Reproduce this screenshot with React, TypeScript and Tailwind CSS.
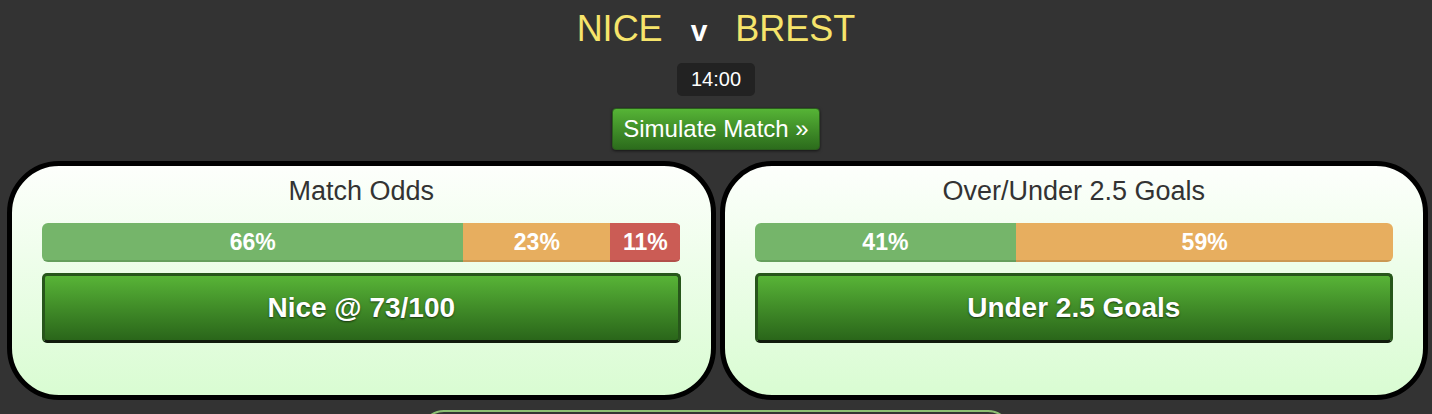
type Segment = { pct: number; color: string }

type Market = {
  title: string
  segments: Segment[]
  pick: string
}

const markets: Market[] = [
  {
    title: 'Match Odds',
    segments: [
      { pct: 66, color: 'bg-[#75b56a]' },
      { pct: 23, color: 'bg-[#e7ae5f]' },
      { pct: 11, color: 'bg-[#cb5c55]' },
    ],
    pick: 'Nice @ 73/100',
  },
  {
    title: 'Over/Under 2.5 Goals',
    segments: [
      { pct: 41, color: 'bg-[#75b56a]' },
      { pct: 59, color: 'bg-[#e7ae5f]' },
    ],
    pick: 'Under 2.5 Goals',
  },
]

function MarketCard({ market }: { market: Market }) {
  return (
    <div className="flex-1 rounded-[52px] border-[5px] border-black bg-gradient-to-b from-[#fdfffc] to-[#d9fcd2] px-[30px] pt-[10px] pb-[52px]">
      <h2 className="text-center text-[27px] leading-[30px] text-[#333]">{market.title}</h2>
      <div className="mt-[17px] flex h-[39px] overflow-hidden rounded-[6px]">
        {market.segments.map((s, i) => (
          <div
            key={i}
            className={`${s.color} flex items-center justify-center text-[23px] font-bold leading-[39px] text-white shadow-[inset_0_-2px_0_rgba(0,0,0,0.12)]`}
            style={{ width: `${s.pct}%` }}
          >
            {s.pct}%
          </div>
        ))}
      </div>
      <button className="mt-[11px] flex h-[70px] w-full items-center justify-center rounded-[5px] border-[3px] border-[#27561b] border-b-[#101a0c] bg-gradient-to-b from-[#58b437] to-[#2a661a] text-[28px] font-bold text-white [text-shadow:0_1px_2px_rgba(0,0,0,0.6)]">
        {market.pick}
      </button>
    </div>
  )
}

export default function App() {
  return (
    <div className="h-[414px] overflow-hidden bg-[#333333] font-['Liberation_Sans',Arial,sans-serif]">
      <div className="flex items-baseline justify-center gap-[28px] pt-[9px]">
        <span className="text-[36px] leading-[40px] text-[#f6e46b]">NICE</span>
        <span className="text-[30px] font-bold leading-[40px] text-white">v</span>
        <span className="text-[36px] leading-[40px] text-[#f6e46b]">BREST</span>
      </div>

      <div className="mt-[12px] flex justify-center">
        <span className="rounded-[5px] bg-[#222] px-[14px] text-[20px] leading-[33px] text-white">14:00</span>
      </div>

      <div className="mt-[12px] flex justify-center">
        <button className="h-[42px] rounded-[4px] border border-[#2a5e1c] bg-gradient-to-b from-[#56b436] to-[#2c6c1c] px-[10px] text-[24px] leading-[40px] text-white shadow-[0_1px_3px_rgba(0,0,0,0.6)]">
          Simulate Match »
        </button>
      </div>

      <div className="mt-[11px] flex gap-[4px] pl-[7px] pr-[4px]">
        {markets.map((m) => (
          <MarketCard key={m.title} market={m} />
        ))}
      </div>

      <div className="mx-auto mt-[10px] h-[40px] w-[592px] rounded-t-[24px] border-2 border-[#8dbf73]" />
    </div>
  )
}
